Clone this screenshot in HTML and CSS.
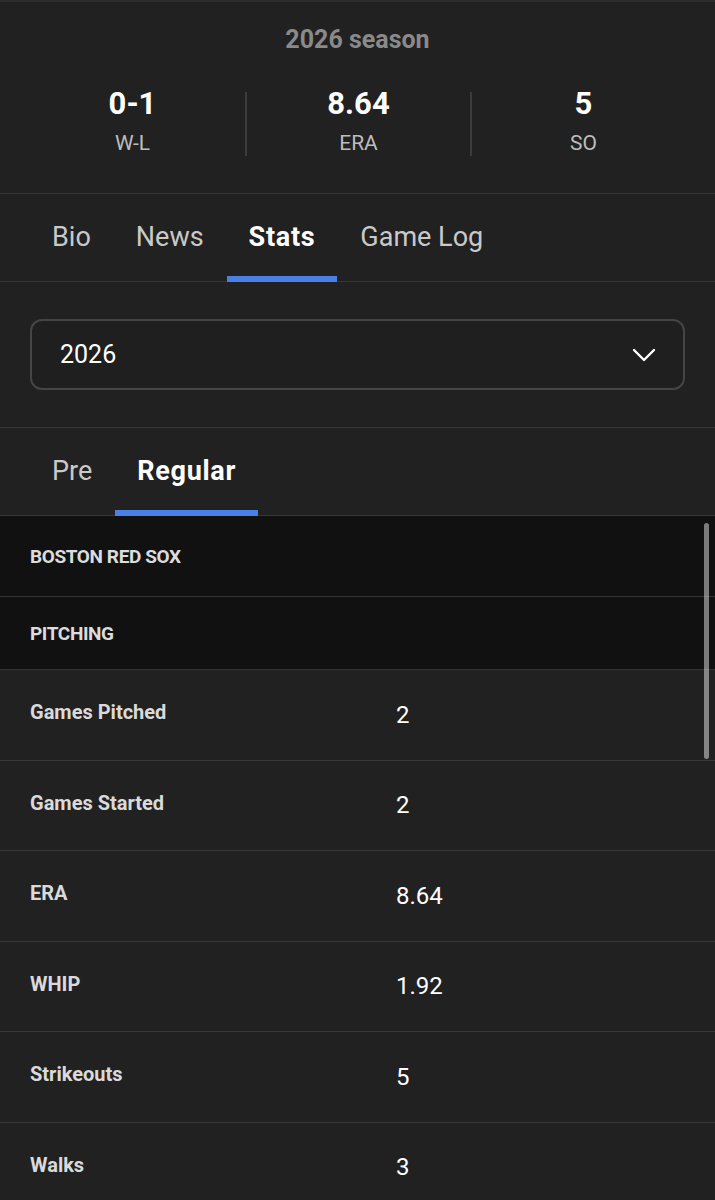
FILE: index.html
```html
<!DOCTYPE html>
<html lang="en">
<head>
    <meta charset="UTF-8">
    <meta name="viewport" content="width=device-width, initial-scale=1">
    <title>Player Stats</title>
    <link rel="stylesheet" href="styles.css">
</head>
<body>

<div id="page">
    <!-- resumo da temporada -->
    <section class="season">
        <div class="season-title">2026 season</div>
        <div class="season-stats">
            <div class="season-stat">
                <div class="stat-value">0-1</div>
                <div class="stat-label">W-L</div>
            </div>
            <div class="season-stat">
                <div class="stat-value">8.64</div>
                <div class="stat-label">ERA</div>
            </div>
            <div class="season-stat">
                <div class="stat-value">5</div>
                <div class="stat-label">SO</div>
            </div>
        </div>
    </section>

    <nav class="tabs">
        <a class="tab">Bio</a>
        <a class="tab">News</a>
        <a class="tab active">Stats</a>
        <a class="tab">Game Log</a>
    </nav>

    <div class="season-select">
        <div class="select-box">
            <span>2026</span>
            <svg class="chevron" width="24" height="16" viewBox="0 0 24 16">
                <path d="M2 3 L12 13 L22 3" fill="none" stroke="#fff" stroke-width="2.4" stroke-linecap="round" stroke-linejoin="round"/>
            </svg>
        </div>
    </div>

    <nav class="tabs">
        <a class="tab">Pre</a>
        <a class="tab active">Regular</a>
    </nav>

    <div class="stats-table">
        <div class="group-row team-row">BOSTON RED SOX</div>
        <div class="group-row">PITCHING</div>

        <div class="stat-row"><span class="row-label">Games Pitched</span><span class="row-value">2</span></div>
        <div class="stat-row"><span class="row-label">Games Started</span><span class="row-value">2</span></div>
        <div class="stat-row"><span class="row-label">ERA</span><span class="row-value">8.64</span></div>
        <div class="stat-row"><span class="row-label">WHIP</span><span class="row-value">1.92</span></div>
        <div class="stat-row"><span class="row-label">Strikeouts</span><span class="row-value">5</span></div>
        <div class="stat-row"><span class="row-label">Walks</span><span class="row-value">3</span></div>

        <div class="scrollbar"></div>
    </div>
</div>

</body>
</html>
```

FILE: styles.css
```css
body {
    margin: 0;
    background-color: #212121;
    font-family: Roboto, "Liberation Sans", sans-serif;
    color: #fff;
}

#page {
    border-top: 2px solid #2c2c2c;
    height: 1198px;
    overflow: hidden;
}

/* resumo da temporada */
.season {
    padding: 25px 20px 37px;
    border-bottom: 1px solid #363636;
}

.season-title {
    text-align: center;
    font-size: 25px;
    line-height: 25px;
    font-weight: 700;
    color: #8a8a8a;
}

.season-stats {
    display: grid;
    grid-template-columns: repeat(3, 1fr);
    margin-top: 40px;
}

.season-stat {
    text-align: center;
    padding-bottom: 2px;
}

.season-stat + .season-stat {
    border-left: 2px solid #3c3c3c;
}

.stat-value {
    margin-top: -4px;
    font-size: 31px;
    line-height: 31px;
    font-weight: 700;
}

.stat-label {
    margin-top: 14px;
    font-size: 21px;
    line-height: 21px;
    color: #bdbdbd;
}

/* abas */
.tabs {
    display: flex;
    gap: 1px;
    padding: 0 30px;
    border-bottom: 1px solid #363636;
}

.tab {
    padding: 30px 22px 25px;
    font-size: 27px;
    line-height: 27px;
    color: #c9c9c9;
    border-bottom: 6px solid transparent;
    margin-bottom: -1px;
    cursor: pointer;
}

.tab.active {
    color: #fff;
    font-weight: 700;
    letter-spacing: 0.7px;
    border-bottom-color: #4a7fe6;
}

/* seletor de ano */
.season-select {
    padding: 37px 30px 37px;
    border-bottom: 1px solid #363636;
}

.select-box {
    display: flex;
    justify-content: space-between;
    align-items: center;
    height: 71px;
    box-sizing: border-box;
    padding: 0 27px 0 28px;
    border: 2px solid #454545;
    border-radius: 12px;
    background-color: #1f1f1f;
    font-size: 25px;
}

/* tabela */
.stats-table {
    position: relative;
}

.group-row {
    display: flex;
    align-items: center;
    height: 72px;
    padding: 0 30px;
    background-color: #111;
    border-bottom: 1px solid #333;
    font-size: 19px;
    font-weight: 700;
    letter-spacing: -0.4px;
    color: #dcdcdc;
}

.team-row {
    height: 80px;
}

.stat-row {
    display: grid;
    grid-template-columns: 366px 1fr;
    align-items: center;
    height: 90.5px;
    box-sizing: border-box;
    padding: 0 30px;
    border-bottom: 1px solid #383838;
}

.row-label {
    margin-bottom: 5px;
    font-size: 20px;
    font-weight: 700;
    color: #dadada;
}

.row-value {
    font-size: 24px;
    color: #fff;
}

.scrollbar {
    position: absolute;
    top: 7px;
    right: 6px;
    width: 5px;
    height: 236px;
    border-radius: 3px;
    background-color: rgba(255, 255, 255, 0.45);
}
```
